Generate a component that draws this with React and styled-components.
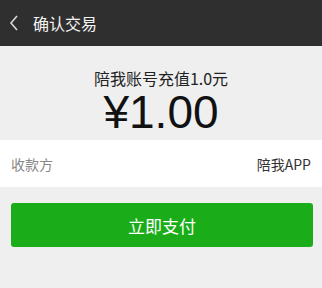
import styled, { createGlobalStyle } from "styled-components";

const Global = createGlobalStyle`
html, body {
  margin: 0;
  padding: 0;
  background: #efefef;
  font-family: "Noto Sans CJK SC", "Liberation Sans", sans-serif;
}
`;

const Page = styled.div`
width: 322px;
height: 288px;
background: #efefef;
display: flex;
flex-direction: column;
`;

const Header = styled.div`
height: 46px;
background: #2f2f2f;
display: flex;
align-items: center;
padding-left: 9px;
gap: 14px;
`;

const Back = styled.svg`
width: 10px;
height: 16px;
`;

const Title = styled.span`
color: #f4f4f4;
font-size: 16px;
`;

const Summary = styled.div`
height: 94px;
display: flex;
flex-direction: column;
align-items: center;
padding-top: 22px;
box-sizing: border-box;
`;

const Desc = styled.div`
font-size: 16px;
color: #222;
line-height: 20px;
`;

const Amount = styled.div`
font-family: "Liberation Sans", sans-serif;
font-size: 46px;
line-height: 46px;
margin-top: 1px;
color: #111;
`;

const Row = styled.div`
height: 47px;
background: #fff;
display: flex;
align-items: center;
justify-content: space-between;
padding: 0 11px;
font-size: 14px;
`;

const Label = styled.span`
color: #888;
`;

const Value = styled.span`
color: #333;
`;

const Pay = styled.button`
margin: 16px 9px 0 11px;
height: 44px;
border: none;
border-radius: 3px;
background: #1aad19;
color: #fff;
font-family: "Noto Sans CJK SC", sans-serif;
font-size: 17px;
`;

function App() {
  return (
    <Page>
      <Global />
      <Header>
        <Back viewBox="0 0 10 16">
          <path d="M8 1 L2 8 L8 15" fill="none" stroke="#d8d8d8" strokeWidth="1.6" />
        </Back>
        <Title>确认交易</Title>
      </Header>
      <Summary>
        <Desc>陪我账号充值1.0元</Desc>
        <Amount>¥1.00</Amount>
      </Summary>
      <Row>
        <Label>收款方</Label>
        <Value>陪我APP</Value>
      </Row>
      <Pay>立即支付</Pay>
    </Page>
  );
}

export default App;
